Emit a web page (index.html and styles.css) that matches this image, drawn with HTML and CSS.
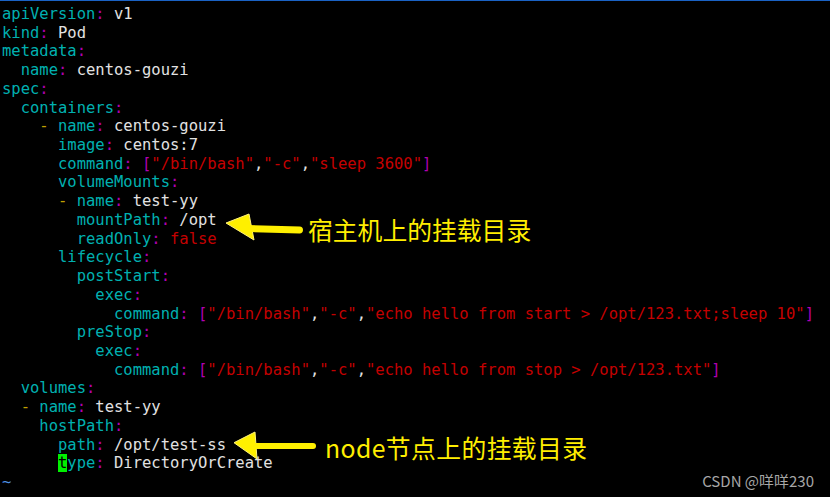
FILE: index.html
```html
<!DOCTYPE html>
<html>
<head>
<meta charset="utf-8">
<link rel="stylesheet" href="styles.css">
</head>
<body>
<div class="term">
<div class="ln"><span class="k">apiVersion</span><span class="p">:</span><span class="v"> v1</span></div>
<div class="ln"><span class="k">kind</span><span class="p">:</span><span class="v"> Pod</span></div>
<div class="ln"><span class="k">metadata</span><span class="p">:</span></div>
<div class="ln">  <span class="k">name</span><span class="p">:</span><span class="v"> centos-gouzi</span></div>
<div class="ln"><span class="k">spec</span><span class="p">:</span></div>
<div class="ln">  <span class="k">containers</span><span class="p">:</span></div>
<div class="ln">    <span class="d">-</span> <span class="k">name</span><span class="p">:</span><span class="v"> centos-gouzi</span></div>
<div class="ln">      <span class="k">image</span><span class="p">:</span><span class="v"> centos:7</span></div>
<div class="ln">      <span class="k">command</span><span class="p">:</span> <span class="p">[</span><span class="s">"/bin/bash"</span><span class="v">,</span><span class="s">"-c"</span><span class="v">,</span><span class="s">"sleep 3600"</span><span class="p">]</span></div>
<div class="ln">      <span class="k">volumeMounts</span><span class="p">:</span></div>
<div class="ln">      <span class="d">-</span> <span class="k">name</span><span class="p">:</span><span class="v"> test-yy</span></div>
<div class="ln">        <span class="k">mountPath</span><span class="p">:</span><span class="v"> /opt</span></div>
<div class="ln">        <span class="k">readOnly</span><span class="p">:</span> <span class="s">false</span></div>
<div class="ln">      <span class="k">lifecycle</span><span class="p">:</span></div>
<div class="ln">        <span class="k">postStart</span><span class="p">:</span></div>
<div class="ln">          <span class="k">exec</span><span class="p">:</span></div>
<div class="ln">            <span class="k">command</span><span class="p">:</span> <span class="p">[</span><span class="s">"/bin/bash"</span><span class="v">,</span><span class="s">"-c"</span><span class="v">,</span><span class="s">"echo hello from start &gt; /opt/123.txt;sleep 10"</span><span class="p">]</span></div>
<div class="ln">        <span class="k">preStop</span><span class="p">:</span></div>
<div class="ln">          <span class="k">exec</span><span class="p">:</span></div>
<div class="ln">            <span class="k">command</span><span class="p">:</span> <span class="p">[</span><span class="s">"/bin/bash"</span><span class="v">,</span><span class="s">"-c"</span><span class="v">,</span><span class="s">"echo hello from stop &gt; /opt/123.txt"</span><span class="p">]</span></div>
<div class="ln">  <span class="k">volumes</span><span class="p">:</span></div>
<div class="ln">  <span class="d">-</span> <span class="k">name</span><span class="p">:</span><span class="v"> test-yy</span></div>
<div class="ln">    <span class="k">hostPath</span><span class="p">:</span></div>
<div class="ln">      <span class="k">path</span><span class="p">:</span><span class="v"> /opt/test-ss</span></div>
<div class="ln">      <span class="cur">t</span><span class="k">ype</span><span class="p">:</span><span class="v"> DirectoryOrCreate</span></div>
<div class="ln"><span class="tilde">~</span></div>

<div class="note note1">
<svg class="arrow a1" width="82" height="32" viewBox="0 0 82 32">
<polygon points="2,12 25,3 30,29" fill="#fff000" stroke="#fff27a" stroke-width="1" stroke-linejoin="round"/>
<line x1="24" y1="17.5" x2="75.5" y2="19" stroke="#fff000" stroke-width="7" stroke-linecap="round"/>
</svg>
<span class="label l1">宿主机上的挂载目录</span>
</div>

<div class="note note2">
<svg class="arrow a2" width="88" height="34" viewBox="0 0 88 34">
<polygon points="2,13.7 23,3 25,30" fill="#fff000" stroke="#fff27a" stroke-width="1" stroke-linejoin="round"/>
<line x1="22" y1="17" x2="81" y2="17" stroke="#fff000" stroke-width="6" stroke-linecap="round"/>
</svg>
<span class="label l2">node节点上的挂载目录</span>
</div>

<div class="mark">CSDN @咩咩230</div>
</div>
</body>
</html>
```

FILE: styles.css
```css
html, body {
  margin: 0;
  padding: 0;
  background: #000;
}
body {
  width: 830px;
  height: 497px;
  overflow: hidden;
}
.term {
  position: relative;
  box-sizing: border-box;
  height: 497px;
  border-top: 1px solid #1a62c4;
  padding: 4px 0 0 2px;
  font-family: "DejaVu Sans Mono", monospace;
  font-size: 15.5px;
  line-height: 18.72px;
  color: #e2e2e2;
}
.ln {
  white-space: pre;
  height: 18.72px;
}
.k { color: #00b0b0; }
.p { color: #b000b0; }
.v { color: #e2e2e2; }
.s { color: #c40000; }
.d { color: #c0a000; }
.cur {
  background: #00f000;
  color: #000;
}
.tilde { color: #4e8ee0; }

.note {
  position: absolute;
  display: flex;
  align-items: flex-start;
}
.note1 { left: 224px; top: 210px; }
.note2 { left: 232px; top: 428px; }
.arrow { display: block; flex: none; }
.label {
  font-family: "Noto Sans CJK SC", "Noto Sans", sans-serif;
  font-size: 24.8px;
  line-height: 25px;
  color: #ffee00;
  white-space: nowrap;
}
.l1 { margin-left: 2px; margin-top: 5.5px; }
.l2 { margin-left: 5px; margin-top: 6px; letter-spacing: 0.4px; }

.mark {
  position: absolute;
  right: 16px;
  top: 472px;
  font-family: "Noto Sans CJK SC", "Noto Sans", sans-serif;
  font-size: 15px;
  line-height: 16px;
  color: #a6a6a6;
}
```
